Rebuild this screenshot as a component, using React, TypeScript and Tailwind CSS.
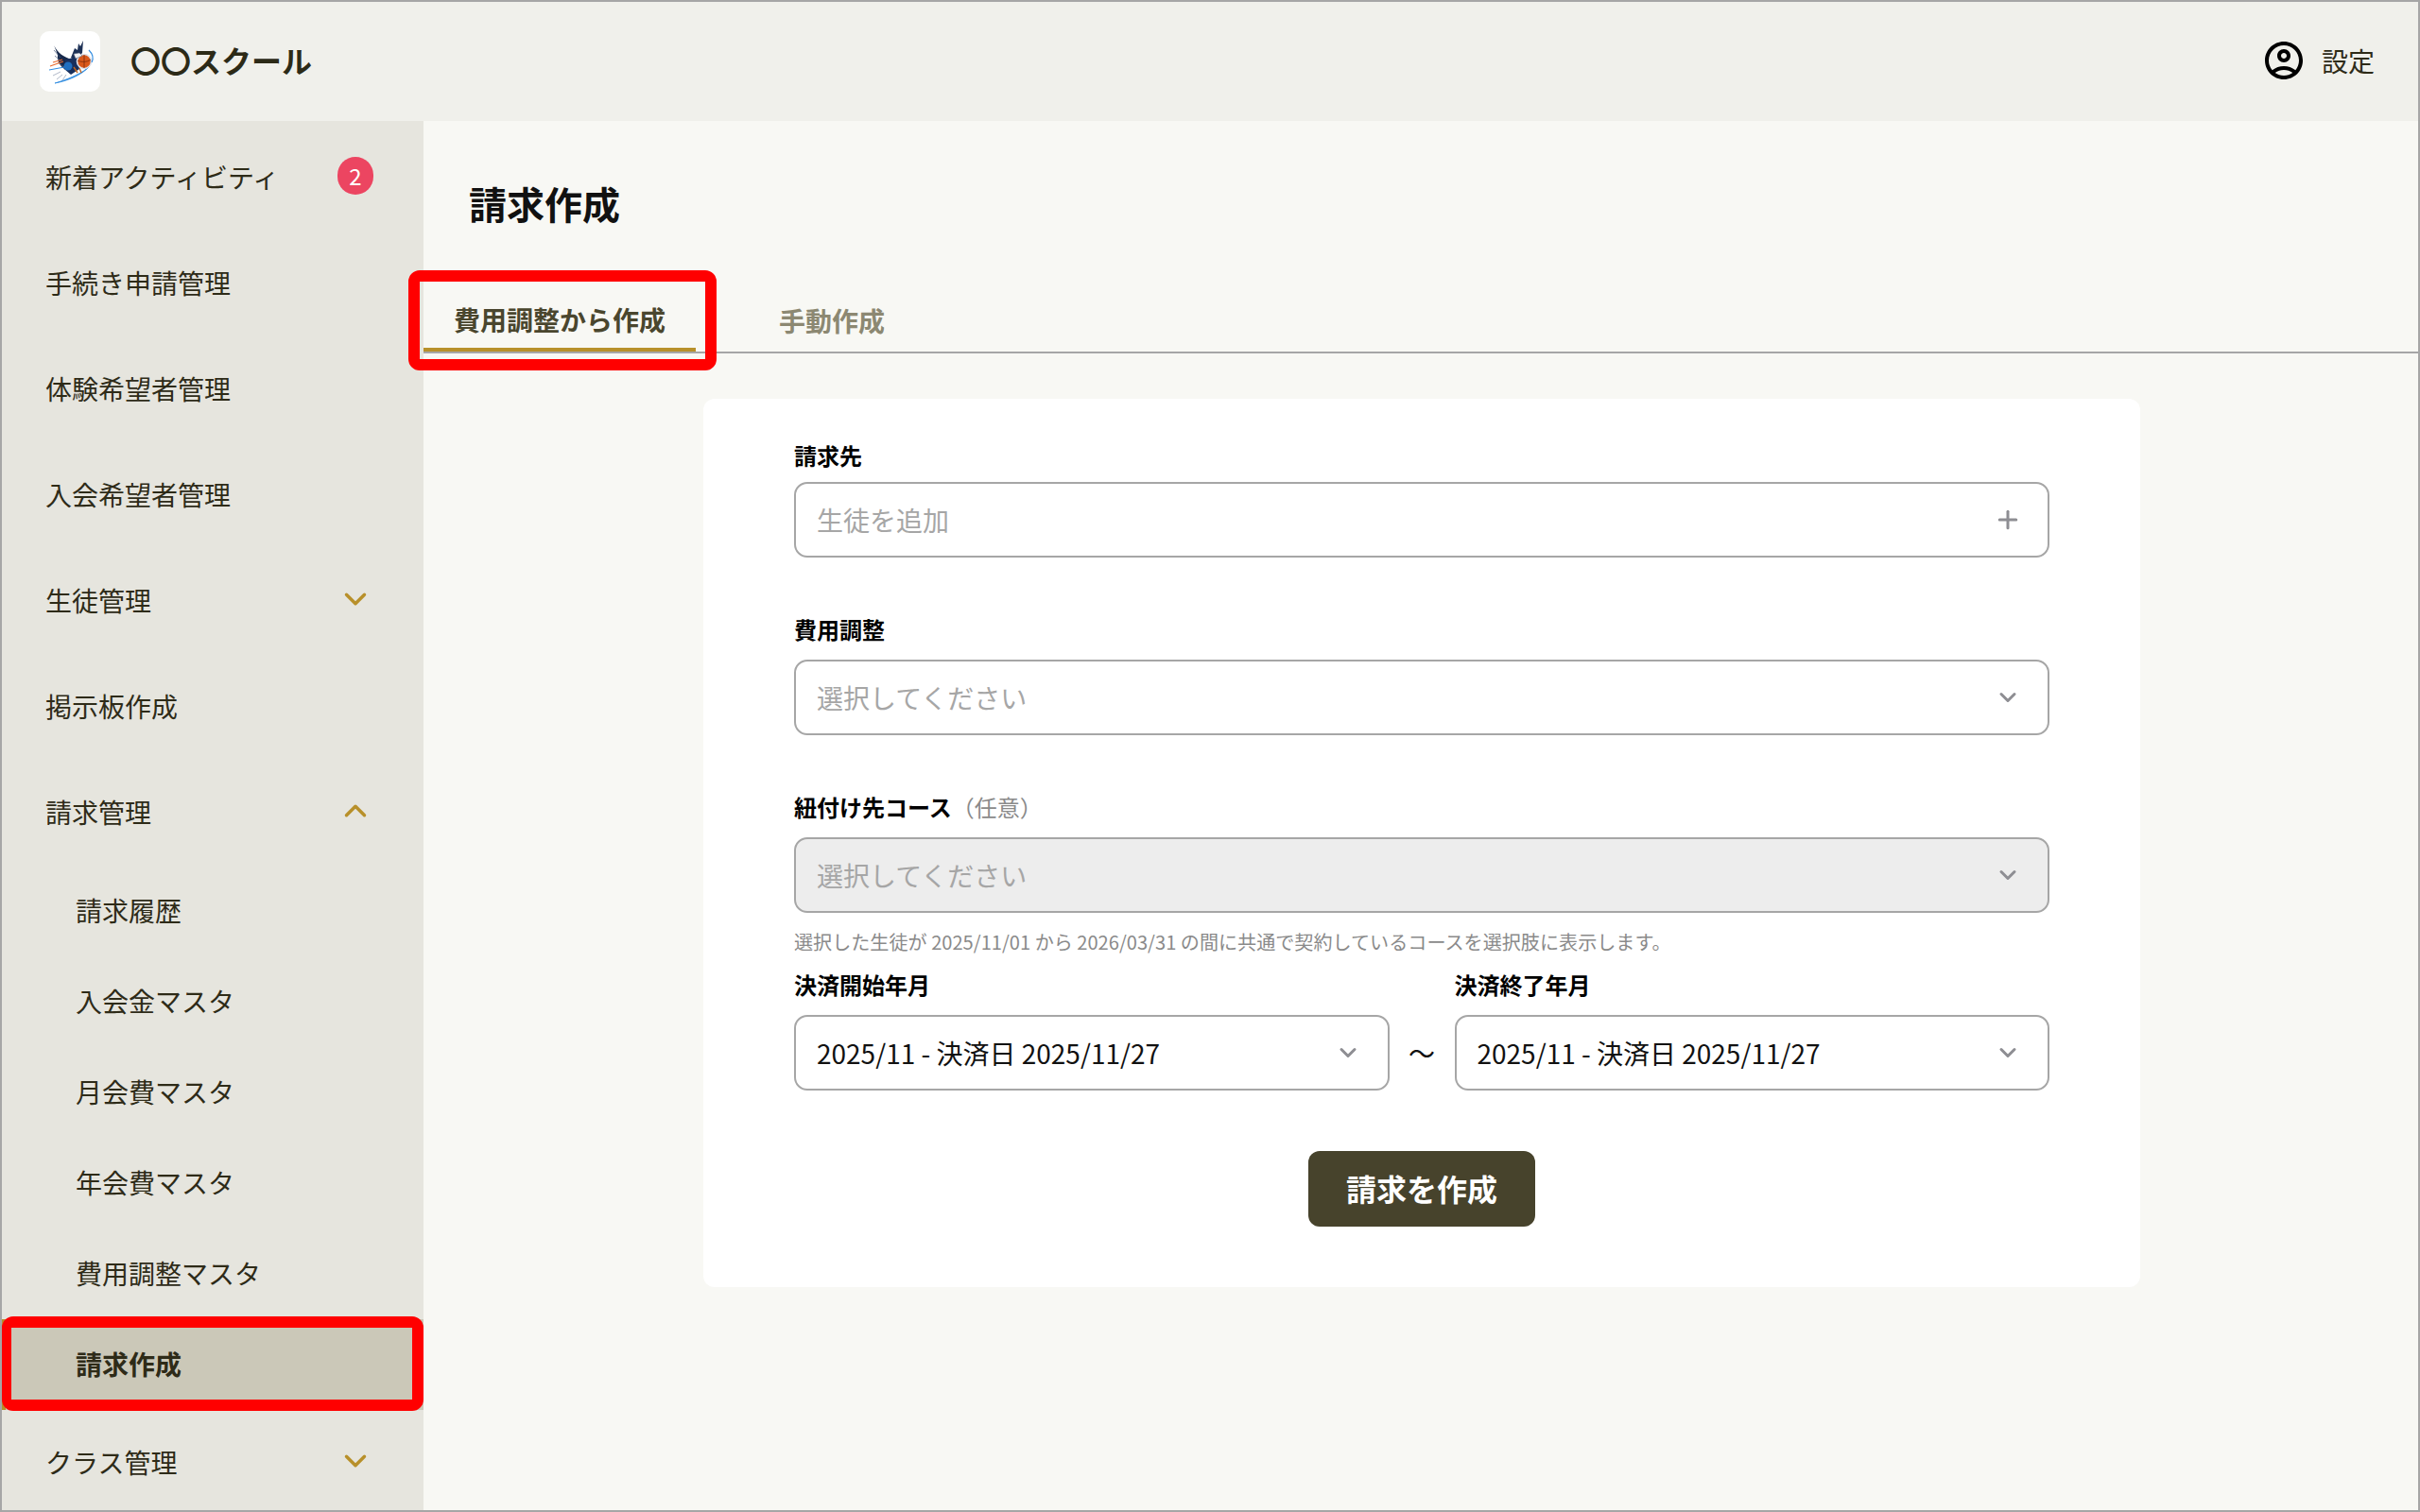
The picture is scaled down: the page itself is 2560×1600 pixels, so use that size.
import { ChevronDown, ChevronUp, Plus } from 'lucide-react';
import { MdOutlineAccountCircle } from 'react-icons/md';

function Logo() {
  return (
    <div className="flex h-16 w-16 shrink-0 items-center justify-center rounded-[10px] bg-white">
      <svg width="64" height="64" viewBox="0 0 64 64" fill="none">
        <path d="M16 55 C28 53 44 47 53 37 C46 44 30 51 16 55 Z" fill="#2f8be0" stroke="#2f8be0" strokeWidth="0.8" />
        <path d="M14 12 C17 21 23 26 31 29 L34 43 C25 42 18 34 19 25 Z" fill="#17294b" />
        <path d="M15 20 L22 28 M16 26 L24 33 M19 33 L26 38" stroke="#46597a" strokeWidth="0.7" />
        <path d="M33 28 L37 18 L40 20 L41 13 L43 16 L46 10 L45 23 L38 31 Z" fill="#1d3156" />
        <path d="M27 30 L40 27 L42 40 L33 46 L26 40 Z" fill="#182f5c" />
        <circle cx="30" cy="37" r="4.5" fill="#1f6fc0" />
        <path d="M11 37 L25 32 M14 33 L24 30" stroke="#ea6a2c" strokeWidth="1.2" />
        <path d="M10 41 L26 38" stroke="#2f8be0" strokeWidth="1" />
        <path d="M22 43 L14 47 M24 46 L18 51 M28 46 L24 52" stroke="#8d9ab0" strokeWidth="0.7" />
        <circle cx="47" cy="32" r="7.5" fill="#d9591c" stroke="#dfe2ea" strokeWidth="1.6" />
        <path d="M40 31 C44 33 50 33 54 30 M47 25 L47 39" stroke="#7a2c0c" strokeWidth="0.8" />
        <path d="M52 20 C56 24 57 29 55 33" stroke="#2f8be0" strokeWidth="1.2" />
        <path d="M36 24 L42 23 L45 26 L38 29 Z" fill="#f1f1f4" stroke="#52607a" strokeWidth="0.5" />
        <path d="M36 38 L40 44 M42 39 L44 44" stroke="#c0651f" strokeWidth="1.4" />
      </svg>
    </div>
  );
}

function NavItem({ label, open, badge }: { label: string; open?: boolean; badge?: string }) {
  return (
    <div className="flex h-[112px] items-center justify-between pl-[46px] pr-[53px] text-[28px] text-[#2e2b18]">
      <span className="-mt-[3px]">{label}</span>
      {badge && (
        <span className="-mt-[4px] flex h-10 w-[38px] items-center justify-center rounded-full bg-[#ec4561] text-[24px] leading-none text-white">
          {badge}
        </span>
      )}
      {open === false && <ChevronDown size={38} strokeWidth={2.2} className="-mt-[4px] text-[#b8902a]" />}
      {open === true && <ChevronUp size={38} strokeWidth={2.2} className="-mt-[4px] text-[#b8902a]" />}
    </div>
  );
}

function SubItem({ label, active }: { label: string; active?: boolean }) {
  if (active) {
    return (
      <div className="relative flex h-24 items-center border-l-4 border-[#b8902a] bg-[#cbc8b8] pl-[74px] text-[28px] font-bold text-[#2e2b18]">
        <span className="-mt-[3px]">{label}</span>
        <div className="absolute -bottom-px -left-[4px] -top-[3px] right-0 rounded-[12px] border-y-[12px] border-l-[10px] border-r-[12px] border-[#ff0000]" />
      </div>
    );
  }
  return (
    <div className="flex h-24 items-center pl-[78px] text-[28px] text-[#2e2b18]">
      <span className="-mt-[3px]">{label}</span>
    </div>
  );
}

function Label({ text, note, tight }: { text: string; note?: string; tight?: boolean }) {
  return (
    <div className={`flex h-9 items-center text-[24px] font-bold text-black ${tight ? 'mb-[10px] -mt-px' : 'mb-[14px]'}`}>
      {text}
      {note && <span className="font-normal text-[#8a8a8a]">{note}</span>}
    </div>
  );
}

function Field({ text, placeholder, disabled, icon }: { text: string; placeholder?: boolean; disabled?: boolean; icon?: 'plus' }) {
  return (
    <div
      className={`flex h-20 items-center justify-between rounded-[14px] border-2 border-[#a6a6a6] pl-[22px] pr-[24px] text-[28px] ${
        disabled ? 'bg-[#ededed]' : 'bg-white'
      } ${placeholder ? 'text-[#a6a6a6]' : 'text-[#111111]'}`}
    >
      <span>{text}</span>
      <span className="flex w-9 justify-center">
        {icon === 'plus' ? (
          <Plus size={30} strokeWidth={2.4} className="text-[#8e8e93]" />
        ) : (
          <ChevronDown size={28} strokeWidth={2.6} className="text-[#8e8e93]" />
        )}
      </span>
    </div>
  );
}

export default function App() {
  return (
    <div className="flex h-[1600px] w-[2560px] flex-col overflow-hidden border-2 border-[#a6a6a6] bg-[#f8f8f4] font-['Noto_Sans_CJK_JP',sans-serif]">
      <header className="flex h-[126px] shrink-0 items-center justify-between bg-[#f0f0eb] pl-[40px] pr-[46px]">
        <div className="flex items-center gap-8">
          <Logo />
          <span className="-mt-[4px] text-[32px] font-bold text-[#2c2a17]">〇〇スクール</span>
        </div>
        <div className="flex items-center gap-[16px]">
          <MdOutlineAccountCircle size={48} className="-mt-[2px] text-black" />
          <span className="-mt-[2px] text-[28px] text-[#2e2b18]">設定</span>
        </div>
      </header>

      <div className="flex min-h-0 flex-1">
        <aside className="w-[446px] shrink-0 overflow-hidden bg-[#e6e5de] pt-[4px]">
          <NavItem label="新着アクティビティ" badge="2" />
          <NavItem label="手続き申請管理" />
          <NavItem label="体験希望者管理" />
          <NavItem label="入会希望者管理" />
          <NavItem label="生徒管理" open={false} />
          <NavItem label="掲示板作成" />
          <NavItem label="請求管理" open={true} />
          <SubItem label="請求履歴" />
          <SubItem label="入会金マスタ" />
          <SubItem label="月会費マスタ" />
          <SubItem label="年会費マスタ" />
          <SubItem label="費用調整マスタ" />
          <SubItem label="請求作成" active />
          <NavItem label="クラス管理" open={false} />
        </aside>

        <main className="relative min-w-0 flex-1">
          <h1 className="pl-[48px] pt-[59px] text-[40px] font-bold leading-[56px] text-[#111111]">請求作成</h1>

          <div className="mt-[63px] flex border-b-2 border-[#a6a6a6]">
            <div className="relative flex h-[66px] w-[288px] items-center justify-center border-b-4 border-[#b8902a] pt-[2px] text-[28px] font-bold text-[#4a462e]">
              費用調整から作成
              <div className="absolute -bottom-[24px] -left-[16px] -right-[22px] -top-[20px] rounded-[12px] border-[12px] border-[#ff0000]" />
            </div>
            <div className="ml-[88px] flex h-[66px] items-center pb-px text-[28px] font-bold text-[#8c8872]">手動作成</div>
          </div>

          <div className="pl-[2px]">
            <div className="mx-auto mt-[48px] w-[1520px] rounded-[12px] bg-white px-[96px] pb-[64px] pt-[43px]">
              <Label text="請求先" tight />
              <Field text="生徒を追加" placeholder icon="plus" />

              <div className="mt-[58px]">
                <Label text="費用調整" />
                <Field text="選択してください" placeholder />
              </div>

              <div className="mt-[58px]">
                <Label text="紐付け先コース" note="（任意）" />
                <Field text="選択してください" placeholder disabled />
                <p className="mb-[12px] mt-[16px] text-[20.1px] leading-[30px] text-[#8a8a8a]">
                  選択した生徒が 2025/11/01 から 2026/03/31 の間に共通で契約しているコースを選択肢に表示します。
                </p>
              </div>

              <div className="flex items-end">
                <div className="flex-1">
                  <Label text="決済開始年月" />
                  <Field text="2025/11 - 決済日 2025/11/27" />
                </div>
                <div className="flex h-20 w-[69px] items-center justify-center text-[28px] text-[#111111]">～</div>
                <div className="flex-1">
                  <Label text="決済終了年月" />
                  <Field text="2025/11 - 決済日 2025/11/27" />
                </div>
              </div>

              <div className="mt-[64px] flex justify-center">
                <button className="h-20 w-[240px] rounded-[12px] bg-[#47432c] pb-[3px] text-[32px] font-bold text-white">請求を作成</button>
              </div>
            </div>
          </div>
        </main>
      </div>
    </div>
  );
}
